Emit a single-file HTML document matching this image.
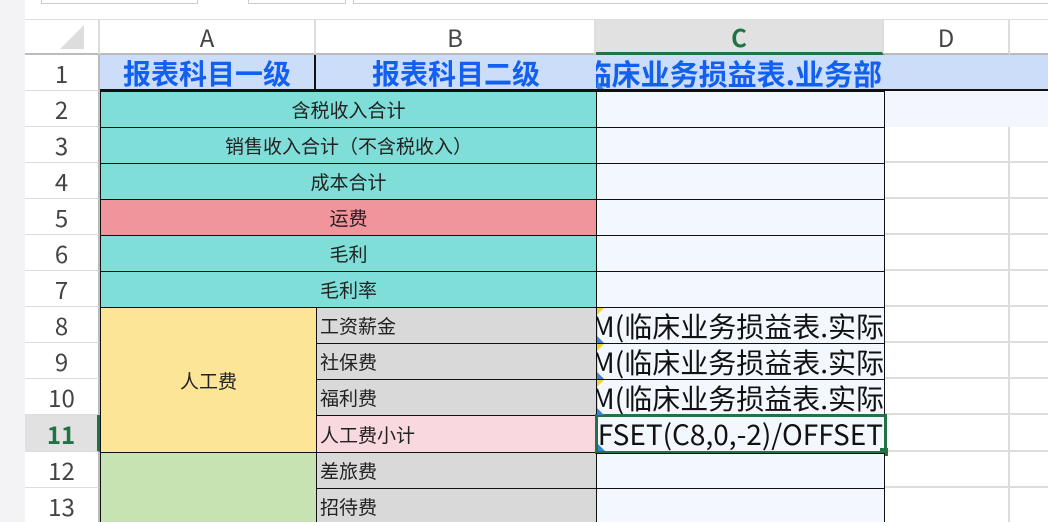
<!DOCTYPE html><html><head><meta charset="utf-8"><style>
*{margin:0;padding:0;box-sizing:border-box}
html,body{width:1048px;height:522px;overflow:hidden}
body{background:#fff;position:relative;font-family:"Liberation Sans","Noto Sans CJK SC",sans-serif}
div{position:absolute}
.c{display:flex;align-items:center;justify-content:center;white-space:nowrap;overflow:hidden;color:#222;font-size:19px;font-family:"Noto Sans CJK SC",sans-serif}
.l{justify-content:flex-start;padding-left:3px}
.rh{left:25px;width:75px;font-size:23px;color:#444;background:#fff;border-bottom:1px solid #ddd;border-right:2px solid #bbb}
.ch{top:20px;height:35px;font-size:23px;color:#444;border-right:2px solid #ddd;border-bottom:2px solid #bbb;background:#fff}
.bd{border:1px solid #111}
.cc{background:#f3f7fe;font-size:28px;justify-content:flex-start;color:#111}
.g{background:#fff;border-bottom:2px solid #ddd;border-right:2px solid #ddd}
</style></head><body>
<div style="left:0;top:0;width:25px;height:522px;background:#f3f3f5"></div>
<div style="left:25px;top:0;width:1023px;height:20px;background:#fff;border-bottom:1px solid #ddd"></div>
<div style="left:41px;top:-2px;width:157px;height:6px;border:1px solid #ccc"></div>
<div style="left:248px;top:-2px;width:98px;height:6px;border:1px solid #ccc"></div>
<div style="left:353px;top:-2px;width:700px;height:6px;border:1px solid #ccc"></div>
<div class="ch" style="left:25px;width:75px"></div>
<div style="left:60px;top:25px;width:0;height:0;border-left:24px solid transparent;border-bottom:24px solid #ddd"></div>
<div class="ch c" style="left:100px;width:216px;font-size:24px;color:#444">A</div>
<div class="ch c" style="left:316px;width:280px;font-size:24px;color:#444">B</div>
<div class="ch c" style="left:596px;width:288px;background:#e1e1e1;color:#217346;font-weight:bold;font-size:24px;border-bottom:3px solid #217346">C</div>
<div class="ch c" style="left:884px;width:126px;font-size:24px;color:#444">D</div>
<div class="ch c" style="left:1010px;width:40px"></div>
<div class="rh c" style="top:55px;height:36px;font-size:24px;color:#444">1</div>
<div class="rh c" style="top:91px;height:36px;font-size:24px;color:#444">2</div>
<div class="rh c" style="top:127px;height:36px;font-size:24px;color:#444">3</div>
<div class="rh c" style="top:163px;height:36px;font-size:24px;color:#444">4</div>
<div class="rh c" style="top:199px;height:36px;font-size:24px;color:#444">5</div>
<div class="rh c" style="top:235px;height:36px;font-size:24px;color:#444">6</div>
<div class="rh c" style="top:271px;height:36px;font-size:24px;color:#444">7</div>
<div class="rh c" style="top:307px;height:36px;font-size:24px;color:#444">8</div>
<div class="rh c" style="top:343px;height:36px;font-size:24px;color:#444">9</div>
<div class="rh c" style="top:379px;height:36px;font-size:24px;color:#444">10</div>
<div class="rh c" style="top:415px;height:37px;background:#e1e1e1;color:#217346;font-weight:bold;font-size:24px;border-right:3px solid #217346">11</div>
<div class="rh c" style="top:452px;height:36px;font-size:24px;color:#444">12</div>
<div class="rh c" style="top:488px;height:36px;font-size:24px;color:#444">13</div>
<div style="left:884px;top:91px;width:164px;height:36px;background:#f3f6fd"></div>
<div class="g" style="left:884px;top:127px;width:126px;height:36px"></div><div class="g" style="left:1010px;top:127px;width:40px;height:36px"></div>
<div class="g" style="left:884px;top:163px;width:126px;height:36px"></div><div class="g" style="left:1010px;top:163px;width:40px;height:36px"></div>
<div class="g" style="left:884px;top:199px;width:126px;height:36px"></div><div class="g" style="left:1010px;top:199px;width:40px;height:36px"></div>
<div class="g" style="left:884px;top:235px;width:126px;height:36px"></div><div class="g" style="left:1010px;top:235px;width:40px;height:36px"></div>
<div class="g" style="left:884px;top:271px;width:126px;height:36px"></div><div class="g" style="left:1010px;top:271px;width:40px;height:36px"></div>
<div class="g" style="left:884px;top:307px;width:126px;height:36px"></div><div class="g" style="left:1010px;top:307px;width:40px;height:36px"></div>
<div class="g" style="left:884px;top:343px;width:126px;height:36px"></div><div class="g" style="left:1010px;top:343px;width:40px;height:36px"></div>
<div class="g" style="left:884px;top:379px;width:126px;height:36px"></div><div class="g" style="left:1010px;top:379px;width:40px;height:36px"></div>
<div class="g" style="left:884px;top:415px;width:126px;height:37px"></div><div class="g" style="left:1010px;top:415px;width:40px;height:37px"></div>
<div class="g" style="left:884px;top:452px;width:126px;height:36px"></div><div class="g" style="left:1010px;top:452px;width:40px;height:36px"></div>
<div class="g" style="left:884px;top:488px;width:126px;height:36px"></div><div class="g" style="left:1010px;top:488px;width:40px;height:36px"></div>
<div style="left:100px;top:55px;width:948px;height:36px;background:#ccddf9;border-bottom:2px solid #111"></div>
<div class="c" style="left:100px;top:55px;width:216px;height:36px;color:#1160f0;font-weight:bold;font-size:28px;border-right:2px solid #111">报表科目一级</div>
<div class="c" style="left:316px;top:55px;width:280px;height:36px;color:#1160f0;font-weight:bold;font-size:28px">报表科目二级</div>
<div class="c" style="left:596px;top:55px;width:288px;height:36px;color:#1160f0;font-weight:bold;font-size:29px;justify-content:flex-end;padding-right:2px">=临床业务损益表.业务部</div>
<div class="c bd" style="left:100px;top:91px;width:497px;height:37px;background:#7fded8">含税收入合计</div>
<div class="c bd" style="left:100px;top:127px;width:497px;height:37px;background:#7fded8">销售收入合计（不含税收入）</div>
<div class="c bd" style="left:100px;top:163px;width:497px;height:37px;background:#7fded8">成本合计</div>
<div class="c bd" style="left:100px;top:199px;width:497px;height:37px;background:#f0959c">运费</div>
<div class="c bd" style="left:100px;top:235px;width:497px;height:37px;background:#7fded8">毛利</div>
<div class="c bd" style="left:100px;top:271px;width:497px;height:37px;background:#7fded8">毛利率</div>
<div class="c bd" style="left:100px;top:307px;width:217px;height:146px;background:#fde597">人工费</div>
<div class="c bd" style="left:100px;top:452px;width:217px;height:80px;background:#c8e3b2"></div>
<div class="c bd l" style="left:316px;top:307px;width:281px;height:37px;background:#d9d9d9">工资薪金</div>
<div class="c bd l" style="left:316px;top:343px;width:281px;height:37px;background:#d9d9d9">社保费</div>
<div class="c bd l" style="left:316px;top:379px;width:281px;height:37px;background:#d9d9d9">福利费</div>
<div class="c bd l" style="left:316px;top:415px;width:281px;height:38px;background:#f9d9df">人工费小计</div>
<div class="c bd l" style="left:316px;top:452px;width:281px;height:37px;background:#d9d9d9">差旅费</div>
<div class="c bd l" style="left:316px;top:488px;width:281px;height:37px;background:#d9d9d9">招待费</div>
<div class="c bd cc" style="left:596px;top:91px;width:289px;height:37px"></div>
<div class="c bd cc" style="left:596px;top:127px;width:289px;height:37px"></div>
<div class="c bd cc" style="left:596px;top:163px;width:289px;height:37px"></div>
<div class="c bd cc" style="left:596px;top:199px;width:289px;height:37px"></div>
<div class="c bd cc" style="left:596px;top:235px;width:289px;height:37px"></div>
<div class="c bd cc" style="left:596px;top:271px;width:289px;height:37px"></div>
<div class="c bd cc" style="left:596px;top:307px;width:289px;height:37px;justify-content:flex-end">=SUM(临床业务损益表.实际</div>
<div class="c bd cc" style="left:596px;top:343px;width:289px;height:37px;justify-content:flex-end">=SUM(临床业务损益表.实际</div>
<div class="c bd cc" style="left:596px;top:379px;width:289px;height:37px;justify-content:flex-end">=SUM(临床业务损益表.实际</div>
<div class="c cc" style="left:595px;top:414px;width:292px;height:40px;border:3px solid #217346;justify-content:flex-end;padding-right:1px">=OFFSET(C8,0,-2)/OFFSET</div>
<div style="left:880px;top:448px;width:8px;height:8px;background:#217346"></div>
<div class="c bd cc" style="left:596px;top:453px;width:289px;height:36px"></div>
<div class="c bd cc" style="left:596px;top:488px;width:289px;height:37px"></div>
<div style="left:597px;top:308px;border-right:7px solid transparent;border-top:7px solid #f6d32a;width:0;height:0"></div>
<div style="left:597px;top:344px;border-right:7px solid transparent;border-top:7px solid #f6d32a;width:0;height:0"></div>
<div style="left:597px;top:380px;border-right:7px solid transparent;border-top:7px solid #f6d32a;width:0;height:0"></div>
<div style="left:597px;top:336px;border-right:7px solid transparent;border-bottom:7px solid #3b82e0;width:0;height:0"></div>
<div style="left:597px;top:372px;border-right:7px solid transparent;border-bottom:7px solid #3b82e0;width:0;height:0"></div>
<div style="left:597px;top:408px;border-right:7px solid transparent;border-bottom:7px solid #3b82e0;width:0;height:0"></div>
<div style="left:598px;top:444px;border-right:7px solid transparent;border-bottom:7px solid #3b82e0;width:0;height:0"></div>
<div style="left:597px;top:82px;border-right:7px solid transparent;border-bottom:7px solid #3b82e0;width:0;height:0"></div>
</body></html>
